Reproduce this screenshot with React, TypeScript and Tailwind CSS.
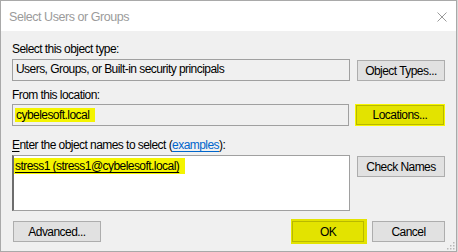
const btn =
  'h-[21px] border border-[#adadad] bg-[#e1e1e1] flex items-center justify-center shrink-0';

export default function App() {
  return (
    <div className="w-[458px] h-[252px] bg-[#d9d9d9] font-['Liberation_Sans',Arial,sans-serif] text-[12px] tracking-[-0.55px] text-black">
      <div className="w-[457px] h-[252px] border border-[#a9a9a9] bg-[#f0f0f0] flex flex-col relative">
        {/* title bar */}
        <div className="h-[30px] bg-white flex items-center justify-between pl-[8px] pr-[9px] shrink-0">
          <span className="text-[12.5px] tracking-[-0.45px] text-[#9b9b9b] leading-[14px] mt-px">
            Select Users or Groups
          </span>
          <svg width="10" height="10" viewBox="0 0 10 10" className="mt-[1px]">
            <path d="M0.5 0.5 L9.5 9.5 M9.5 0.5 L0.5 9.5" stroke="#9a9a9a" strokeWidth="1" />
          </svg>
        </div>

        {/* body */}
        <div className="flex-1 flex flex-col px-[11px]">
          <div className="mt-[11px] h-[14px] leading-[14px]">Select this object type:</div>
          <div className="mt-[3px] flex items-start gap-[7px]">
            <div className="w-[338px] h-[22px] border border-[#a0a0a0] pl-[3px] pt-[2px] leading-[14px]">
              Users, Groups, or Built-in security principals
            </div>
            <div className={btn + ' w-[88px] mt-px'}>Object Types...</div>
          </div>

          <div className="mt-[7px] h-[14px] leading-[14px]">From this location:</div>
          <div className="mt-[2px] flex items-start gap-[6px]">
            <div className="w-[338px] h-[22px] border border-[#a0a0a0] pl-[2px] pt-px">
              <span className="inline-block bg-[#f4f400] leading-[14px] pl-px pr-[6px]">cybelesoft.local</span>
            </div>
            <div className="w-[90px] h-[22px] bg-[#f6f600] p-px shrink-0">
              <div className="w-full h-full border border-[#b9b900] bg-[#e3e300] flex items-center justify-center">
                Locations...
              </div>
            </div>
          </div>

          <div className="mt-[12px] h-[14px] leading-[14px]">
            <span className="underline underline-offset-2">E</span>nter the object names to select (
            <span className="text-[#0066cc] underline underline-offset-2">examples</span>):
          </div>
          <div className="mt-[3px] flex items-start gap-[7px]">
            <div className="w-[338px] h-[56px] bg-white border border-[#a0a0a0] border-l-2 border-l-[#6d6d6d] pt-px">
              <span className="inline-block bg-[#f4f400] leading-[16px] pl-px pr-[6px] underline underline-offset-2">
                stress1 (stress1@cybelesoft.local)
              </span>
            </div>
            <div className={btn + ' w-[88px] mt-px'}>Check Names</div>
          </div>

          <div className="mt-[10px] flex items-start">
            <div className={btn + ' w-[88px] ml-px'}>Advanced...</div>
            <div className="flex-1" />
            <div className="h-[21px] w-[72px] border border-[#b9b900] bg-[#e3e300] shadow-[1px_0_0_2px_#e3e300] flex items-center justify-center">
              OK
            </div>
            <div className={btn + ' w-[73px] ml-[8px]'}>Cancel</div>
          </div>
        </div>

        {/* resize grip */}
        <svg className="absolute right-[1px] bottom-[1px]" width="9" height="9" viewBox="0 0 9 9">
          {[
            [7, 1],
            [4, 4],
            [7, 4],
            [1, 7],
            [4, 7],
            [7, 7],
          ].map(([x, y]) => (
            <rect key={`${x}-${y}`} x={x} y={y} width="1.5" height="1.5" fill="#b8b8b8" />
          ))}
        </svg>
      </div>
    </div>
  );
}
